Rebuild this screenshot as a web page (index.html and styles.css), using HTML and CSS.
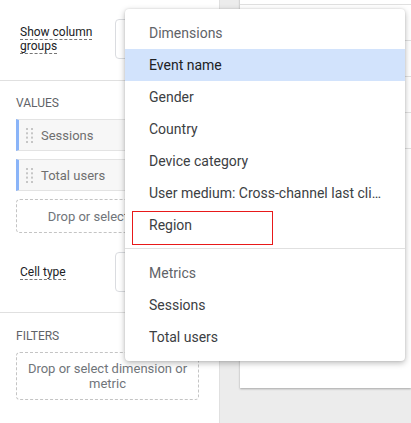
FILE: index.html
```html
<!DOCTYPE html>
<html lang="en">
<head>
    <meta charset="UTF-8">
    <meta name="viewport" content="width=device-width, initial-scale=1.0">
    <title>Table settings</title>
    <link rel="stylesheet" href="styles.css">
</head>
<body>
    <div class="page">
        <aside class="panel">
            <section class="panel-section panel-section--top">
                <div class="field-row">
                    <span class="field-label"><span class="hint">Show column groups</span></span>
                    <div class="select-box"></div>
                </div>
            </section>

            <section class="panel-section">
                <h3 class="section-title">Values</h3>
                <div class="chip">
                    <svg class="drag-handle" width="7" height="15" viewBox="0 0 7 15">
                        <rect x="0" y="0" width="2" height="2"/><rect x="5" y="0" width="2" height="2"/>
                        <rect x="0" y="4.3" width="2" height="2"/><rect x="5" y="4.3" width="2" height="2"/>
                        <rect x="0" y="8.6" width="2" height="2"/><rect x="5" y="8.6" width="2" height="2"/>
                        <rect x="0" y="13" width="2" height="2"/><rect x="5" y="13" width="2" height="2"/>
                    </svg>
                    <span>Sessions</span>
                </div>
                <div class="chip">
                    <svg class="drag-handle" width="7" height="15" viewBox="0 0 7 15">
                        <rect x="0" y="0" width="2" height="2"/><rect x="5" y="0" width="2" height="2"/>
                        <rect x="0" y="4.3" width="2" height="2"/><rect x="5" y="4.3" width="2" height="2"/>
                        <rect x="0" y="8.6" width="2" height="2"/><rect x="5" y="8.6" width="2" height="2"/>
                        <rect x="0" y="13" width="2" height="2"/><rect x="5" y="13" width="2" height="2"/>
                    </svg>
                    <span>Total users</span>
                </div>
                <div class="drop-zone">Drop or select metric</div>
                <div class="field-row field-row--spaced">
                    <span class="field-label"><span class="hint">Cell type</span></span>
                    <div class="select-box"></div>
                </div>
            </section>

            <section class="panel-section">
                <h3 class="section-title">Filters</h3>
                <div class="drop-zone drop-zone--tall">Drop or select dimension or metric</div>
            </section>
        </aside>

        <main class="canvas">
            <div class="table-card">
                <div class="table-row"></div>
                <div class="table-row"></div>
                <div class="table-row"></div>
                <div class="table-row"></div>
                <div class="table-row"></div>
            </div>
        </main>

        <!-- field picker dropdown, open over the panel -->
        <div class="menu">
            <div class="menu-header">Dimensions</div>
            <div class="menu-item is-active">Event name</div>
            <div class="menu-item">Gender</div>
            <div class="menu-item">Country</div>
            <div class="menu-item">Device category</div>
            <div class="menu-item">User medium: Cross-channel last click</div>
            <div class="menu-item menu-item--marked">Region<span class="mark-box"></span></div>
            <div class="menu-divider"></div>
            <div class="menu-header">Metrics</div>
            <div class="menu-item">Sessions</div>
            <div class="menu-item">Total users</div>
        </div>
    </div>
</body>
</html>
```

FILE: styles.css
```css
html, body {
    margin: 0;
    padding: 0;
}

body {
    font-family: Roboto, 'Liberation Sans', sans-serif;
    color: #202124;
    background-color: #ececec;
    overflow: hidden;
}

.page {
    position: relative;
    display: flex;
    height: 423px;
    overflow: hidden;
}

/* left settings panel */
.panel {
    flex: 0 0 219px;
    background-color: #fff;
    border-right: 1px solid #e0e0e0;
}

.panel-section {
    padding: 14px 19px 20px 16px;
    border-bottom: 1px solid #e0e0e0;
}

.panel-section--top {
    padding: 19px 19px 21px 16px;
}

.panel-section:last-child {
    border-bottom: none;
    padding-top: 15px;
}

.section-title {
    margin: 0 0 8px;
    font-size: 12px;
    line-height: 16px;
    font-weight: 400;
    text-transform: uppercase;
    color: #5f6368;
}

.field-row {
    display: flex;
    align-items: center;
    gap: 12px;
    padding-left: 4px;
}

.field-row--spaced {
    margin-top: 19px;
}

.field-label {
    flex: 0 0 83px;
    font-size: 12px;
    line-height: 14px;
    color: #202124;
}

.hint {
    border-bottom: 1px dashed #757575;
}

.select-box {
    flex: 1;
    height: 40px;
    box-sizing: border-box;
    border: 1px solid #dadce0;
    border-radius: 4px;
}

.chip {
    display: flex;
    align-items: center;
    gap: 8px;
    height: 32px;
    box-sizing: border-box;
    margin-bottom: 8px;
    padding-left: 7px;
    background-color: #f7f7f7;
    border: 1px solid #e3e3e3;
    border-left: 3px solid #8ab4f8;
    font-size: 13px;
    color: #6f6f6f;
}

.drag-handle {
    fill: #c6c6c6;
}

.drop-zone {
    height: 34px;
    box-sizing: border-box;
    display: flex;
    align-items: center;
    justify-content: center;
    border: 1px dashed #c4c4c4;
    border-radius: 4px;
    font-size: 13px;
    color: #70757a;
    text-align: center;
}

.drop-zone--tall {
    height: 48px;
    padding: 8px 4px;
    line-height: 15px;
    margin-right: 1px;
}

/* report canvas */
.canvas {
    flex: 1;
    padding-left: 20px;
}

.table-card {
    height: 419px;
    margin-top: -31px;
    background-color: #fff;
    box-shadow: 0 1px 2px rgba(0, 0, 0, 0.3);
}

.table-row {
    height: 36px;
    box-sizing: border-box;
    border-bottom: 1px solid #e0e0e0;
}

/* dropdown */
.menu {
    position: absolute;
    top: 9px;
    left: 125px;
    width: 280px;
    padding: 8px 0;
    background-color: #fff;
    border-radius: 4px;
    box-shadow: 0 2px 6px rgba(0, 0, 0, 0.28), 0 0 2px rgba(0, 0, 0, 0.12);
    z-index: 10;
}

.menu-header,
.menu-item {
    height: 32px;
    line-height: 32px;
    padding: 0 22px 0 24px;
    font-size: 14px;
    white-space: nowrap;
    overflow: hidden;
    text-overflow: ellipsis;
}

.menu-header {
    color: #5f6368;
}

.menu-item {
    color: #3c4043;
}

.menu-item.is-active {
    background-color: #d2e3fc;
    color: #202124;
}

.menu-item--marked {
    position: relative;
    overflow: visible;
}

.mark-box {
    position: absolute;
    left: 7px;
    top: 2px;
    width: 141px;
    height: 34px;
    box-sizing: border-box;
    border: 1px solid #e8191a;
}

.menu-divider {
    height: 1px;
    margin: 7px 0 8px;
    background-color: #e0e0e0;
}
```
